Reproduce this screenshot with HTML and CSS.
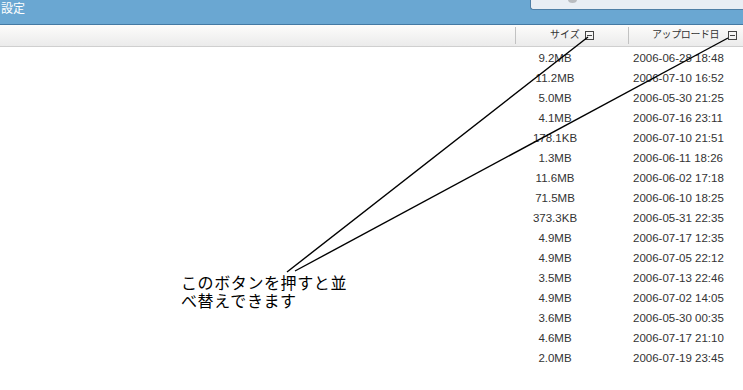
FILE: index.html
```html
<!DOCTYPE html>
<html lang="ja">
<head>
    <meta charset="UTF-8">
    <title>ファイル一覧</title>
    <link rel="stylesheet" href="styles.css">
</head>
<body>

    <div class="topbar">
        <span class="topbar-title">設定</span>
        <div class="tab-panel"><span class="tab-knob"></span></div>
    </div>

    <div class="list-head">
        <div class="head-cell"></div>
        <div class="head-cell head-size">サイズ<span class="sort-btn"></span></div>
        <div class="head-cell head-date">アップロード日<span class="sort-btn"></span></div>
    </div>

    <div class="list" id="fileList"></div>

    <!-- annotation -->
    <svg class="arrows" width="743" height="390" viewBox="0 0 743 390">
        <line x1="588" y1="37" x2="287" y2="272" />
        <line x1="728" y1="38" x2="295" y2="271" />
    </svg>
    <div class="note">このボタンを押すと並<br>べ替えできます</div>

    <script>
        let files = [
            ["9.2MB", "2006-06-28 18:48"],
            ["11.2MB", "2006-07-10 16:52"],
            ["5.0MB", "2006-05-30 21:25"],
            ["4.1MB", "2006-07-16 23:11"],
            ["178.1KB", "2006-07-10 21:51"],
            ["1.3MB", "2006-06-11 18:26"],
            ["11.6MB", "2006-06-02 17:18"],
            ["71.5MB", "2006-06-10 18:25"],
            ["373.3KB", "2006-05-31 22:35"],
            ["4.9MB", "2006-07-17 12:35"],
            ["4.9MB", "2006-07-05 22:12"],
            ["3.5MB", "2006-07-13 22:46"],
            ["4.9MB", "2006-07-02 14:05"],
            ["3.6MB", "2006-05-30 00:35"],
            ["4.6MB", "2006-07-17 21:10"],
            ["2.0MB", "2006-07-19 23:45"]
        ];

        let list = document.getElementById("fileList");
        files.forEach(f => {
            let row = document.createElement("div");
            row.className = "row";
            row.innerHTML = `<span></span><span class="size">${f[0]}</span><span class="date">${f[1]}</span>`;
            list.appendChild(row);
        });
    </script>

</body>
</html>
```

FILE: styles.css
```css
body {
    font-family: "Liberation Sans", "Noto Sans CJK JP", sans-serif;
    background-color: white;
    margin: 0;
    padding: 0;
    width: 743px;
    height: 390px;
    overflow: hidden;
    position: relative;
}

.topbar {
    height: 24px;
    background-color: #6aa7d2;
    border-bottom: 1px solid #4479a3;
    display: flex;
    justify-content: space-between;
    align-items: flex-start;
}

.topbar-title {
    font-family: "Noto Sans CJK JP", sans-serif;
    color: white;
    font-size: 12px;
    line-height: 15px;
    padding-left: 1px;
}

.tab-panel {
    width: 212px;
    height: 9px;
    background-color: #e9eef4;
    border-left: 1px solid #4f7fa6;
    border-bottom: 1px solid #4f7fa6;
    border-bottom-left-radius: 3px;
    position: relative;
}

.tab-knob {
    position: absolute;
    left: 37px;
    top: -4px;
    width: 9px;
    height: 7px;
    border-radius: 50%;
    background-color: #b9bcc0;
}

.list-head {
    display: grid;
    grid-template-columns: 515px 113px 1fr;
    height: 21px;
    background: linear-gradient(#fdfcfb, #ebebeb);
    border-bottom: 1px solid #cfcfcf;
    font-family: "Noto Sans CJK JP", sans-serif;
    font-size: 10px;
    color: #333;
    white-space: nowrap;
}

.head-cell {
    display: flex;
    align-items: center;
    overflow: hidden;
    padding-bottom: 4px;
}

.head-size {
    border-left: 1px solid #c2c2c2;
    padding-left: 34px;
    margin: 2px 0;
}

.head-date {
    border-left: 1px solid #c2c2c2;
    padding-left: 23px;
    margin: 2px 0;
    letter-spacing: -0.4px;
}

.sort-btn {
    display: inline-block;
    flex-shrink: 0;
    width: 7px;
    height: 7px;
    border: 1px solid #444;
    margin-left: 5px;
    margin-top: 4px;
    position: relative;
}

.head-date .sort-btn {
    margin-left: 9px;
}

.sort-btn::after {
    content: "";
    position: absolute;
    left: 1px;
    right: 1px;
    top: 3px;
    height: 1px;
    background-color: #444;
}

.list {
    padding-top: 1px;
}

.row {
    display: grid;
    grid-template-columns: 515px 113px 1fr;
    height: 20px;
    align-items: center;
    font-size: 11.5px;
    color: #333;
}

.size {
    text-align: center;
    padding-right: 33px;
}

.date {
    padding-left: 5px;
}

.arrows {
    position: absolute;
    left: 0;
    top: 0;
}

.arrows line {
    stroke: black;
    stroke-width: 1.4;
}

.note {
    position: absolute;
    left: 181px;
    top: 273px;
    font-family: "Noto Sans CJK JP", sans-serif;
    font-size: 16px;
    line-height: 18px;
    letter-spacing: 0.6px;
    color: black;
}
```
